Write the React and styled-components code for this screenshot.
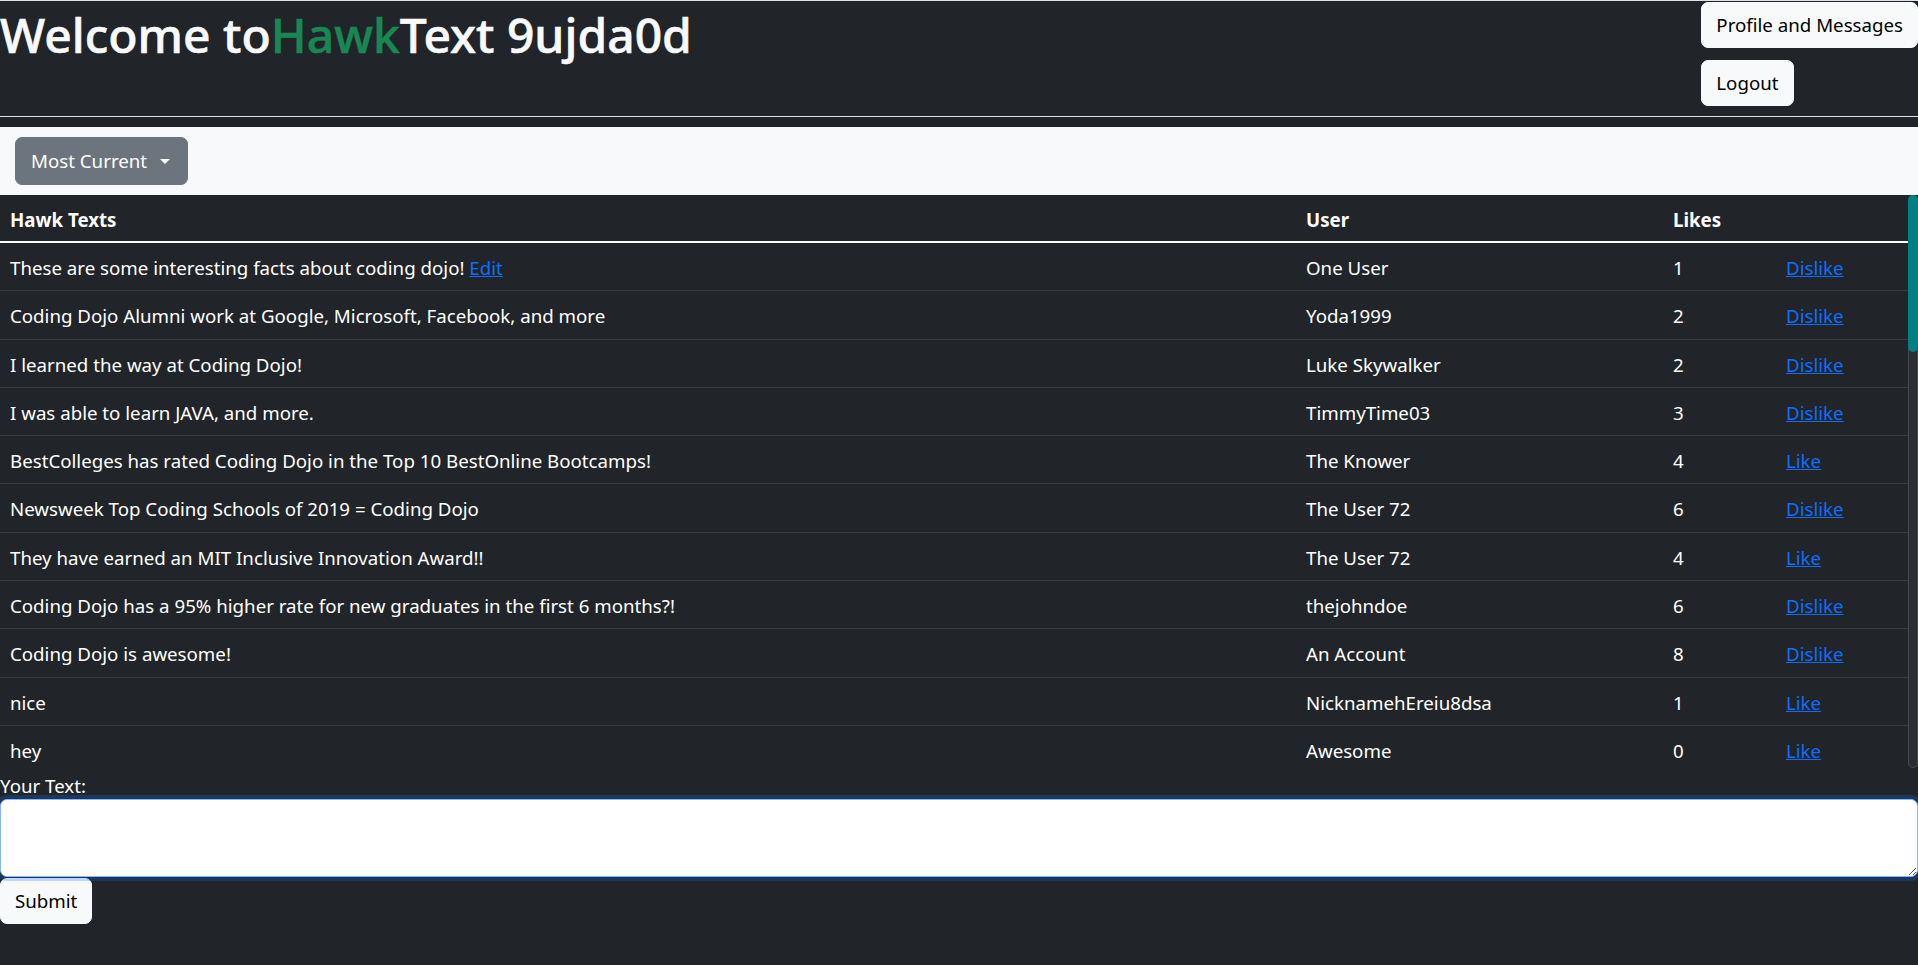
import React from 'react';
import styled, { createGlobalStyle } from 'styled-components';

const texts = [
    { text: 'These are some interesting facts about coding dojo!', user: 'One User', likes: 1, liked: true, own: true },
    { text: 'Coding Dojo Alumni work at Google, Microsoft, Facebook, and more', user: 'Yoda1999', likes: 2, liked: true },
    { text: 'I learned the way at Coding Dojo!', user: 'Luke Skywalker', likes: 2, liked: true },
    { text: 'I was able to learn JAVA, and more.', user: 'TimmyTime03', likes: 3, liked: true },
    { text: 'BestColleges has rated Coding Dojo in the Top 10 BestOnline Bootcamps!', user: 'The Knower', likes: 4, liked: false },
    { text: 'Newsweek Top Coding Schools of 2019 = Coding Dojo', user: 'The User 72', likes: 6, liked: true },
    { text: 'They have earned an MIT Inclusive Innovation Award!!', user: 'The User 72', likes: 4, liked: false },
    { text: 'Coding Dojo has a 95% higher rate for new graduates in the first 6 months?!', user: 'thejohndoe', likes: 6, liked: true },
    { text: 'Coding Dojo is awesome!', user: 'An Account', likes: 8, liked: true },
    { text: 'nice', user: 'NicknamehEreiu8dsa', likes: 1, liked: false },
    { text: 'hey', user: 'Awesome', likes: 0, liked: false },
    { text: 'hello world', user: 'Awesome', likes: 0, liked: false },
    { text: 'Python, MERN and Java stacks in one bootcamp', user: 'Yoda1999', likes: 3, liked: false },
    { text: 'Spring Boot is pretty cool', user: 'TimmyTime03', likes: 2, liked: false },
    { text: 'First post!', user: 'One User', likes: 1, liked: false },
    { text: 'Learning React this week', user: 'thejohndoe', likes: 2, liked: false },
    { text: 'Algorithms every morning', user: 'The Knower', likes: 5, liked: false },
    { text: 'Group project demo today', user: 'An Account', likes: 1, liked: false },
    { text: 'Flask and Django are both great', user: 'Luke Skywalker', likes: 0, liked: false },
    { text: 'Belt exam passed!', user: 'The User 72', likes: 7, liked: false },
    { text: 'Who else is coding tonight?', user: 'Awesome', likes: 0, liked: false },
    { text: 'MySQL joins finally make sense', user: 'Yoda1999', likes: 2, liked: false },
    { text: 'Deployed my first app to AWS', user: 'TimmyTime03', likes: 4, liked: false },
    { text: 'Hawk Text is live', user: 'One User', likes: 3, liked: false },
    { text: 'Career services helped me a lot', user: 'thejohndoe', likes: 1, liked: false },
    { text: 'Code review day', user: 'An Account', likes: 0, liked: false },
    { text: 'JavaScript closures are fun', user: 'The Knower', likes: 2, liked: false },
    { text: 'Pair programming rocks', user: 'Luke Skywalker', likes: 1, liked: false },
    { text: 'Bootstrap makes styling quick', user: 'NicknamehEreiu8dsa', likes: 0, liked: false },
    { text: 'Week 8 done', user: 'The User 72', likes: 1, liked: false },
    { text: 'JPA relationships today', user: 'Yoda1999', likes: 0, liked: false },
    { text: 'Graduation is soon!', user: 'Awesome', likes: 3, liked: false },
    { text: 'Hello from the night cohort', user: 'TimmyTime03', likes: 1, liked: false },
    { text: 'Sessions and cookies', user: 'One User', likes: 0, liked: false },
    { text: 'Validation errors everywhere', user: 'thejohndoe', likes: 2, liked: false },
    { text: 'Time for a coffee break', user: 'An Account', likes: 0, liked: false },
    { text: 'Full stack in 16 weeks', user: 'The Knower', likes: 1, liked: false },
    { text: 'test', user: 'Luke Skywalker', likes: 0, liked: false },
    { text: 'Another day another bug', user: 'The User 72', likes: 2, liked: false },
    { text: 'Just pushed to GitHub', user: 'Yoda1999', likes: 0, liked: false },
    { text: 'Ready for interviews', user: 'Awesome', likes: 1, liked: false },
    { text: 'Thanks instructors!', user: 'One User', likes: 4, liked: false },
    { text: 'Goodnight everyone', user: 'NicknamehEreiu8dsa', likes: 0, liked: false },
];

const App = () => {
    return (
        <>
        <GlobalStyle />
        <Header>
            <Title>Welcome to<Brand>Hawk</Brand>Text 9ujda0d</Title>
            <HeaderActions>
                <LightButton>Profile and Messages</LightButton>
                <LightButton>Logout</LightButton>
            </HeaderActions>
        </Header>
        <FilterBar>
            <SortToggle>Most Current</SortToggle>
        </FilterBar>
        <TableArea>
            <TableScroll>
                <Table>
                    <colgroup>
                        <col style={{ width: '1296px' }} />
                        <col style={{ width: '367px' }} />
                        <col style={{ width: '113px' }} />
                        <col />
                    </colgroup>
                    <thead>
                        <tr>
                            <Th>Hawk Texts</Th>
                            <Th>User</Th>
                            <Th>Likes</Th>
                            <Th></Th>
                        </tr>
                    </thead>
                    <tbody>
                        {texts.map((t, i) => (
                            <tr key={i}>
                                <Td>{t.text}{t.own ? <> <Link href="#">Edit</Link></> : null}</Td>
                                <Td>{t.user}</Td>
                                <Td>{t.likes}</Td>
                                <Td><Link href="#">{t.liked ? 'Dislike' : 'Like'}</Link></Td>
                            </tr>
                        ))}
                    </tbody>
                </Table>
            </TableScroll>
            <ScrollRail>
                <ScrollThumb />
            </ScrollRail>
        </TableArea>
        <PostForm>
            <FieldLabel htmlFor="hawkText">Your Text:</FieldLabel>
            <TextArea id="hawkText" rows={2} autoFocus />
            <SubmitButton>Submit</SubmitButton>
        </PostForm>
        </>
    );
};

export default App;

const GlobalStyle = createGlobalStyle`
    body {
        margin: 0;
        background: #212529;
        color: #fff;
        font-family: "Noto Sans", "Open Sans", sans-serif;
        font-size: 18.7px;
        line-height: 1.5;
    }
`;

const Header = styled.header`
    display: flex;
    justify-content: space-between;
    align-items: flex-start;
    border-top: 1px solid #dee2e6;
    border-bottom: 1px solid #dee2e6;
    padding: 1px 0 10px 0;
`;

const Title = styled.h1`
    margin: 4px 0 0 0;
    font-size: 48px;
    font-weight: 500;
    line-height: 1.2;
    color: #f8f9fa;
    -webkit-text-stroke: 0.6px #f8f9fa;
`;

const Brand = styled.span`
    color: #198754;
    -webkit-text-stroke: 0.6px #198754;
`;

const HeaderActions = styled.div`
    display: flex;
    flex-direction: column;
    align-items: flex-start;
    gap: 12px;
`;

const LightButton = styled.button`
    font-family: inherit;
    font-size: 18.7px;
    line-height: 28px;
    padding: 8px 14px;
    color: #000;
    background: #f8f9fa;
    border: 1px solid #f8f9fa;
    border-radius: 7px;
    white-space: nowrap;
    cursor: pointer;
`;

const SubmitButton = styled(LightButton)`
    margin-top: 1px;
`;

const FilterBar = styled.nav`
    margin-top: 10px;
    padding: 10px 15px;
    background: #f8f9fa;
    display: flex;
`;

const SortToggle = styled.button`
    font-family: inherit;
    font-size: 18.7px;
    line-height: 28px;
    padding: 9px 17px 9px 15px;
    color: #fff;
    background: #6c757d;
    border: 1px solid #6c757d;
    border-radius: 7px;
    display: inline-flex;
    align-items: center;

    &::after {
        content: "";
        margin-left: 13px;
        border-top: 5.6px solid #fff;
        border-left: 5.6px solid transparent;
        border-right: 5.6px solid transparent;
    }
`;

const TableArea = styled.div`
    display: flex;
    height: 578px;
`;

const TableScroll = styled.div`
    flex: 1;
    overflow-y: auto;
    scrollbar-width: none;

    &::-webkit-scrollbar {
        display: none;
    }
`;

const ScrollRail = styled.div`
    width: 10px;
    height: 573px;
    box-sizing: border-box;
    background: #2a2e32;
    border-radius: 10px;
    box-shadow: inset 0 0 0 1px #464a4f;
`;

const ScrollThumb = styled.div`
    height: 157px;
    background: #008080;
    border-radius: 10px;
`;

const Table = styled.table`
    width: 100%;
    table-layout: fixed;
    border-collapse: separate;
    border-spacing: 0;
    color: #fff;
`;

const Th = styled.th`
    text-align: left;
    font-weight: 700;
    padding: 11px 10px 7px 10px;
    line-height: 28px;
    border-bottom: 2px solid #fff;
`;

const Td = styled.td`
    padding: 11px 10px 9px 10px;
    line-height: 27.3px;
    border-bottom: 1px solid #373b3e;
    white-space: nowrap;
`;

const Link = styled.a`
    color: #0d6efd;
    text-decoration: underline;
`;

const PostForm = styled.form`
    margin: 0;
`;

const FieldLabel = styled.label`
    display: block;
    line-height: 26px;
`;

const TextArea = styled.textarea`
    display: block;
    position: relative;
    z-index: 1;
    box-sizing: border-box;
    width: 100%;
    height: 78px;
    margin: 0;
    padding: 10px 14px;
    font-family: inherit;
    font-size: 18.7px;
    line-height: 28px;
    color: #212529;
    background: #fff;
    border: 1px solid #86b7fe;
    border-radius: 7px;
    box-shadow: 0 0 0 4px rgba(13, 110, 253, 0.25);
    outline: none;
    caret-color: #000;
`;
